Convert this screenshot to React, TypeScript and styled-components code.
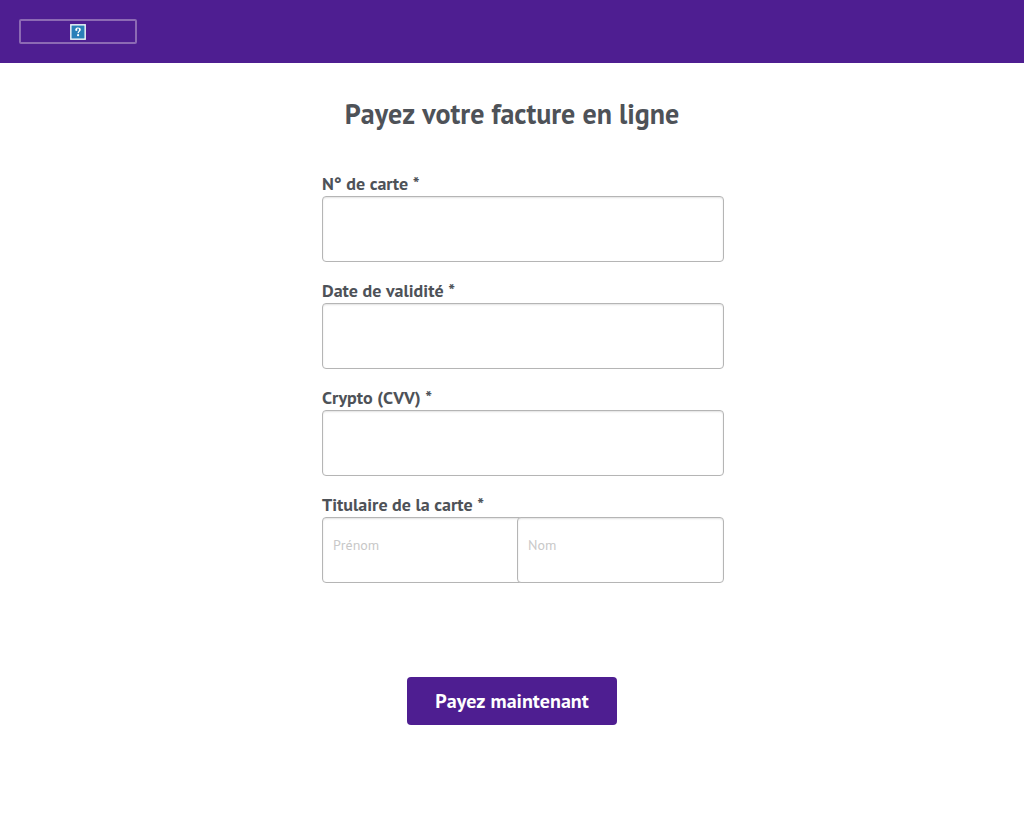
import React from "react";
import styled, { createGlobalStyle } from "styled-components";

const purple = "#4e1e91";
const ink = "#4e5258";

const GlobalStyle = createGlobalStyle`
  body {
    margin: 0;
    background: #fff;
    color: ${ink};
    font-family: "PT Sans", "Noto Sans", sans-serif;
    font-kerning: none;
  }
`;

const Header = styled.header`
  display: flex;
  padding: 19px;
  background: ${purple};
`;

const Logo = styled.a`
  display: flex;
  align-items: center;
  justify-content: center;
  box-sizing: border-box;
  width: 118px;
  height: 25px;
  border: 2px solid #8c6ab4;
  border-radius: 2px;
`;

const Main = styled.main`
  display: flex;
  flex-direction: column;
  align-items: center;
  padding: 32px 20px 40px;
`;

const Title = styled.h1`
  margin: 0;
  font-size: 28px;
  line-height: 38px;
  font-weight: 700;
`;

const Form = styled.form`
  display: flex;
  flex-direction: column;
  width: 100%;
  max-width: 380px;
  margin-top: 41px;
`;

const Field = styled.div`
  margin-bottom: 19px;
`;

const Label = styled.label`
  display: block;
  padding-bottom: 2px;
  font-size: 18px;
  line-height: 20px;
  font-weight: 700;
`;

const Input = styled.input`
  width: 100%;
  height: 44px;
  margin: 0;
  padding: 5px 10px 15px;
  display: block;
  border: 1px solid #b5b5b5;
  border-radius: 4px;
  background: #fff;
  box-shadow: inset 0 1px 2px #e2e2e2;
  color: ${ink};
  font: inherit;
  font-size: 14px;

  &::placeholder {
    color: #c8c8c8;
    opacity: 1;
  }
`;

const NameRow = styled.div`
  display: flex;
  width: calc(100% + 22px);
`;

const NameInput = styled(Input)`
  flex: 1 1 0;
  min-width: 0;

  & + & {
    margin-left: -12px;
  }
`;

const Button = styled.button`
  align-self: center;
  width: 210px;
  height: 48px;
  margin-top: 75px;
  padding: 0;
  border: 0;
  border-radius: 4px;
  background: ${purple};
  color: #fff;
  font: inherit;
  font-size: 20px;
  font-weight: 700;
  font-kerning: none;
  cursor: pointer;
`;

const MissingImage = () => (
  <svg width="16" height="16" viewBox="0 0 16 16" aria-hidden="true">
    <rect width="16" height="16" fill="#b9c9da" />
    <rect x="0.5" y="0.5" width="15" height="15" fill="#fff" />
    <rect x="1.500" y="1.500" width="13" height="13" fill="#2a7fb8" />
    <path
      d="M5.300 5.200C5.600 4.100 6.600 3.600 8 3.600c1.700 0 2.800.8 2.800 2.100 0 1.700-1.900 1.900-2.100 3.600H7.500C7.500 7.300 9 7.300 9 5.700 9 4.900 8.600 4.500 7.900 4.500c-.5 0-.8.2-.8.5 0 .4.300.5.300 1 0 .5-.4.900-1.100.9-.8 0-1.200-.7-1-1.700z"
      fill="#fff"
    />
    <circle cx="8.100" cy="11.200" r="1.100" fill="#fff" />
  </svg>
);

const fields = [
  { id: "card", label: "N° de carte *" },
  { id: "expiry", label: "Date de validité *" },
  { id: "cvv", label: "Crypto (CVV) *" },
];

export default function App() {
  return (
    <>
      <GlobalStyle />
      <Header>
        <Logo href="#" aria-label="Accueil">
          <MissingImage />
        </Logo>
      </Header>
      <Main>
        <Title>Payez votre facture en ligne</Title>
        <Form onSubmit={(e) => e.preventDefault()}>
          {fields.map((f) => (
            <Field key={f.id}>
              <Label htmlFor={f.id}>{f.label}</Label>
              <Input id={f.id} type="text" />
            </Field>
          ))}
          <Field>
            <Label htmlFor="firstName">Titulaire de la carte *</Label>
            <NameRow>
              <NameInput id="firstName" type="text" placeholder="Prénom" />
              <NameInput type="text" placeholder="Nom" aria-label="Nom" />
            </NameRow>
          </Field>
          <Button type="submit">Payez maintenant</Button>
        </Form>
      </Main>
    </>
  );
}
